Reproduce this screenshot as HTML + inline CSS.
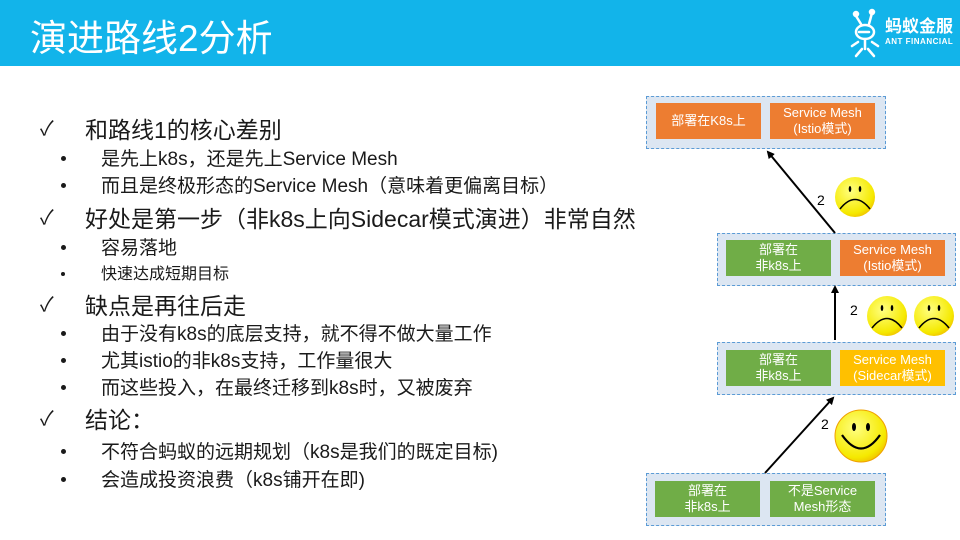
<!DOCTYPE html>
<html><head><meta charset="utf-8"><style>
*{margin:0;padding:0;box-sizing:border-box}
body{width:960px;height:540px;overflow:hidden;background:#fff;font-family:"Liberation Sans","Noto Sans CJK SC",sans-serif;position:relative;color:#1a1a1a}
.hdr{position:absolute;left:0;top:0;width:960px;height:66px;background:#12b4ea}
.title{position:absolute;left:30px;top:8px;font-size:37px;color:#fff;white-space:nowrap}
.l{position:absolute;white-space:nowrap;line-height:1}
.h{font-size:23px;left:85px}
.hc{font-size:20px;left:40px}
.b{font-size:19px;left:101px}
.bd{position:absolute;left:61px;width:5px;height:5px;border-radius:50%;background:#1a1a1a}
.box{position:absolute;background:#dce6f2;border:1px dashed #5b9bd5}
.in{position:absolute;color:#fff;font-size:13px;text-align:center;line-height:16px;display:flex;align-items:center;justify-content:center}
.g{background:#70ad47}.o{background:#ed7d31}.y{background:#ffc000}
.n{position:absolute;font-size:14px;color:#000}
</style></head><body>
<div class="hdr"></div>
<div class="title">演进路线2分析</div>
<svg style="position:absolute;left:850px;top:8px" width="30" height="52" viewBox="0 0 30 52" fill="none" stroke="#fff" stroke-width="2.5" stroke-linecap="round">
<path d="M6 8 L11 16 M22 5 L19 16"/><circle cx="6" cy="6" r="2" fill="#fff"/><circle cx="22" cy="4" r="2" fill="#fff"/>
<ellipse cx="15" cy="24" rx="9" ry="7"/><path d="M9 24 h10"/>
<path d="M15 31 v10 M8 34 l-6 4 M22 34 l6 4 M12 41 l-6 7 M18 41 l6 7"/>
</svg>
<div class="l" style="left:885px;top:18px;font-size:17px;color:#fff;font-weight:bold">蚂蚁金服</div>
<div class="l" style="left:885px;top:38px;font-size:8px;color:#fff;letter-spacing:0.5px;font-weight:bold">ANT FINANCIAL</div>

<div class="l hc" style="top:119px">✓</div><div class="l h" style="top:119px">和路线1的核心差别</div>
<div class="bd" style="top:156px"></div><div class="l b" style="top:150px">是先上k8s，还是先上Service Mesh</div>
<div class="bd" style="top:183px"></div><div class="l b" style="top:177px">而且是终极形态的Service Mesh（意味着更偏离目标）</div>
<div class="l hc" style="top:208px">✓</div><div class="l h" style="top:208px">好处是第一步（非k8s上向Sidecar模式演进）非常自然</div>
<div class="bd" style="top:245px"></div><div class="l b" style="top:239px">容易落地</div>
<div class="bd" style="top:272px;width:4px;height:4px"></div><div class="l b" style="top:267px;font-size:16px">快速达成短期目标</div>
<div class="l hc" style="top:295px">✓</div><div class="l h" style="top:295px">缺点是再往后走</div>
<div class="bd" style="top:331px"></div><div class="l b" style="top:325px">由于没有k8s的底层支持，就不得不做大量工作</div>
<div class="bd" style="top:358px"></div><div class="l b" style="top:352px">尤其istio的非k8s支持，工作量很大</div>
<div class="bd" style="top:385px"></div><div class="l b" style="top:379px">而这些投入，在最终迁移到k8s时，又被废弃</div>
<div class="l hc" style="top:409px">✓</div><div class="l h" style="top:409px">结论：</div>
<div class="bd" style="top:449px"></div><div class="l b" style="top:443px">不符合蚂蚁的远期规划（k8s是我们的既定目标)</div>
<div class="bd" style="top:477px"></div><div class="l b" style="top:471px">会造成投资浪费（k8s铺开在即)</div>

<div class="box" style="left:646px;top:96px;width:240px;height:53px"></div>
<div class="in o" style="left:656px;top:103px;width:105px;height:36px">部署在K8s上</div>
<div class="in o" style="left:770px;top:103px;width:105px;height:36px">Service Mesh<br>(Istio模式)</div>

<div class="box" style="left:717px;top:233px;width:239px;height:53px"></div>
<div class="in g" style="left:726px;top:240px;width:105px;height:36px">部署在<br>非k8s上</div>
<div class="in o" style="left:840px;top:240px;width:105px;height:36px">Service Mesh<br>(Istio模式)</div>

<div class="box" style="left:717px;top:342px;width:239px;height:53px"></div>
<div class="in g" style="left:726px;top:350px;width:105px;height:36px">部署在<br>非k8s上</div>
<div class="in y" style="left:840px;top:350px;width:105px;height:36px">Service Mesh<br>(Sidecar模式)</div>

<div class="box" style="left:646px;top:473px;width:240px;height:53px"></div>
<div class="in g" style="left:655px;top:481px;width:105px;height:36px">部署在<br>非k8s上</div>
<div class="in g" style="left:770px;top:481px;width:105px;height:36px">不是Service<br>Mesh形态</div>

<svg style="position:absolute;left:0;top:0" width="960" height="540">
<defs>
<marker id="a" markerWidth="8" markerHeight="8" refX="6" refY="4" orient="auto" markerUnits="userSpaceOnUse"><path d="M0 0 L8 4 L0 8z" fill="#000"/></marker>
<radialGradient id="s" cx="0.4" cy="0.35" r="0.7"><stop offset="0" stop-color="#ffff80"/><stop offset="0.8" stop-color="#f5e900"/><stop offset="1" stop-color="#f0c000"/></radialGradient>
</defs>
<g stroke="#000" stroke-width="2" marker-end="url(#a)">
<line x1="835" y1="233" x2="768" y2="152"/>
<line x1="835" y1="340" x2="835" y2="287"/>
<line x1="765" y1="473" x2="833" y2="398"/>
</g>
<g stroke="#000" stroke-width="1.6" fill="none">
<circle cx="855" cy="197" r="20" fill="url(#s)" stroke="none"/>
<path d="M840 209 Q855 190 870 209"/>
<circle cx="887" cy="316" r="20" fill="url(#s)" stroke="none"/>
<path d="M872 328 Q887 309 902 328"/>
<circle cx="934" cy="316" r="20" fill="url(#s)" stroke="none"/>
<path d="M919 328 Q934 309 949 328"/>
<circle cx="861" cy="436" r="26" fill="url(#s)" stroke="#f0a000" stroke-width="1"/>
<path d="M842 435 Q861 462 880 435" stroke-width="2.2"/>
</g>
<g fill="#000">
<ellipse cx="850" cy="189" rx="1.3" ry="3"/><ellipse cx="860" cy="189" rx="1.3" ry="3"/>
<ellipse cx="882" cy="308" rx="1.3" ry="3"/><ellipse cx="892" cy="308" rx="1.3" ry="3"/>
<ellipse cx="929" cy="308" rx="1.3" ry="3"/><ellipse cx="939" cy="308" rx="1.3" ry="3"/>
<ellipse cx="854" cy="427" rx="2" ry="4"/><ellipse cx="868" cy="427" rx="2" ry="4"/>
</g>
</svg>
<div class="n" style="left:817px;top:192px">2</div>
<div class="n" style="left:850px;top:302px">2</div>
<div class="n" style="left:821px;top:416px">2</div>
</body></html>
